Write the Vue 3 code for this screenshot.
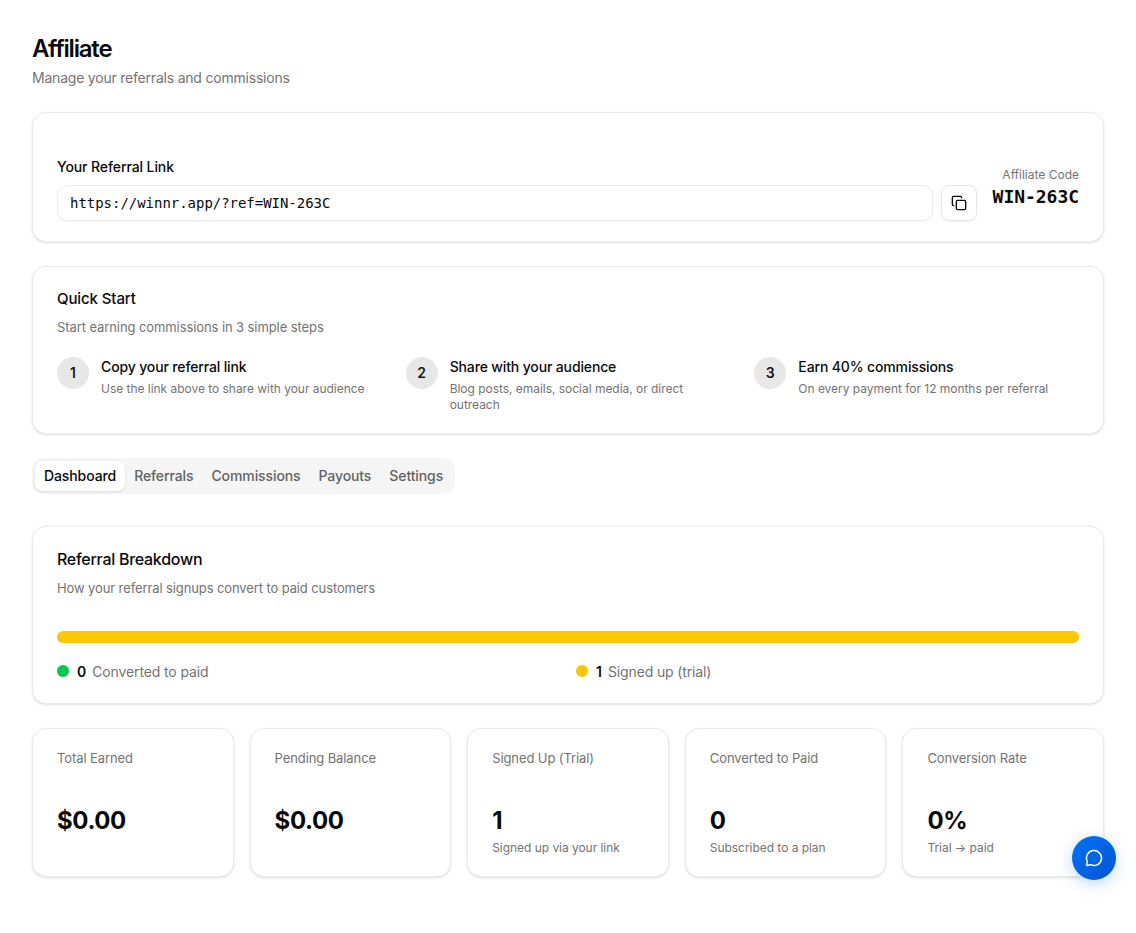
<template>
  <main class="page">
    <header class="page-header">
      <h1 class="page-title">Affiliate</h1>
      <p class="page-subtitle">Manage your referrals and commissions</p>
    </header>

    <section class="card link-card">
      <div class="link-field">
        <label class="link-label" for="referral_link">Your Referral Link</label>
        <div class="link-row">
          <input
            id="referral_link"
            class="link-input"
            type="text"
            :value="referralLink"
            readonly />
          <button class="copy-button" aria-label="Copy" @click="copyLink">
            <svg
              width="16"
              height="16"
              viewBox="0 0 24 24"
              fill="none"
              stroke="currentColor"
              stroke-width="2"
              stroke-linecap="round"
              stroke-linejoin="round">
              <rect x="8" y="8" width="14" height="14" rx="2" ry="2" />
              <path
                d="M4 16c-1.1 0-2-.9-2-2V4c0-1.1.9-2 2-2h10c1.1 0 2 .9 2 2" />
            </svg>
          </button>
        </div>
      </div>
      <div class="code-block">
        <p class="code-label">Affiliate Code</p>
        <p class="code-value">{{ affiliateCode }}</p>
      </div>
    </section>

    <section class="card quick-card">
      <h2 class="quick-title">Quick Start</h2>
      <p class="card-desc">Start earning commissions in 3 simple steps</p>
      <div class="steps">
        <div v-for="(step, index) in steps" :key="step.title" class="step">
          <span class="step-number">{{ index + 1 }}</span>
          <div class="step-body">
            <p class="step-title">{{ step.title }}</p>
            <p class="step-text">{{ step.text }}</p>
          </div>
        </div>
      </div>
    </section>

    <nav class="tabs">
      <button
        v-for="tab in tabs"
        :key="tab"
        class="tab"
        :class="{ active: tab === activeTab }"
        @click="activeTab = tab">
        {{ tab }}
      </button>
    </nav>

    <section class="card breakdown-card">
      <h2 class="breakdown-title">Referral Breakdown</h2>
      <p class="card-desc breakdown-desc">
        How your referral signups convert to paid customers
      </p>
      <div class="bar">
        <div
          v-for="item in breakdown"
          :key="item.label"
          class="bar-part"
          :class="item.color"
          :style="{ width: (item.count / total) * 100 + '%' }"></div>
      </div>
      <div class="legend">
        <div v-for="item in breakdown" :key="item.label" class="legend-item">
          <span class="dot" :class="item.color"></span>
          <span class="legend-count">{{ item.count }}</span>
          <span class="legend-label">{{ item.label }}</span>
        </div>
      </div>
    </section>

    <section class="stats">
      <div v-for="stat in stats" :key="stat.label" class="card stat-card">
        <p class="stat-label">{{ stat.label }}</p>
        <p class="stat-value">{{ stat.value }}</p>
        <p v-if="stat.note" class="stat-note">{{ stat.note }}</p>
      </div>
    </section>

    <button class="chat-button" aria-label="Chat">
      <svg
        width="18"
        height="18"
        viewBox="0 0 24 24"
        fill="none"
        stroke="currentColor"
        stroke-width="2"
        stroke-linecap="round"
        stroke-linejoin="round">
        <path
          d="M2.992 16.342a2 2 0 0 1 .094 1.167l-1.065 3.29a1 1 0 0 0 1.236 1.168l3.413-.998a2 2 0 0 1 1.099.092 10 10 0 1 0-4.777-4.719" />
      </svg>
    </button>
  </main>
</template>

<script setup>
import { ref, computed } from "vue";

const affiliateCode = ref("WIN-263C");
const referralLink = computed(
  () => `https://winnr.app/?ref=${affiliateCode.value}`
);

const steps = [
  {
    title: "Copy your referral link",
    text: "Use the link above to share with your audience",
  },
  {
    title: "Share with your audience",
    text: "Blog posts, emails, social media, or direct outreach",
  },
  {
    title: "Earn 40% commissions",
    text: "On every payment for 12 months per referral",
  },
];

const tabs = ["Dashboard", "Referrals", "Commissions", "Payouts", "Settings"];
const activeTab = ref("Dashboard");

const breakdown = ref([
  { label: "Converted to paid", count: 0, color: "green" },
  { label: "Signed up (trial)", count: 1, color: "yellow" },
]);
const total = computed(() =>
  breakdown.value.reduce((sum, item) => sum + item.count, 0)
);

const stats = [
  { label: "Total Earned", value: "$0.00" },
  { label: "Pending Balance", value: "$0.00" },
  { label: "Signed Up (Trial)", value: "1", note: "Signed up via your link" },
  { label: "Converted to Paid", value: "0", note: "Subscribed to a plan" },
  { label: "Conversion Rate", value: "0%", note: "Trial → paid" },
];

const copyLink = () => {
  navigator.clipboard.writeText(referralLink.value);
};
</script>

<style>
body {
  margin: 0;
  background: #ffffff;
}
</style>

<style scoped>
.page {
  box-sizing: border-box;
  min-height: 933px;
  padding: 32px;
  font-family: Inter, "Liberation Sans", sans-serif;
  font-size: 14px;
  line-height: 20px;
  color: #0a0a0a;
}
.page *,
.page *::before {
  box-sizing: border-box;
}
h1,
h2,
p {
  margin: 0;
}
button {
  font-family: inherit;
  cursor: pointer;
}
.page-header {
  margin-bottom: 24px;
}
.page-title {
  padding-top: 1px;
  font-size: 24px;
  line-height: 32px;
  font-weight: 600;
  letter-spacing: -1.2px;
}
.page-subtitle {
  margin-top: 3px;
  letter-spacing: -0.21px;
  color: #737373;
}
.card {
  background: #ffffff;
  border: 1px solid #ebebeb;
  border-radius: 14px;
  box-shadow: 0 1px 3px rgba(0, 0, 0, 0.1), 0 1px 2px -1px rgba(0, 0, 0, 0.1);
}
.link-card {
  display: flex;
  align-items: center;
  gap: 16px;
  padding: 44px 24px 20px;
}
.link-field {
  flex: 1;
}
.link-label {
  display: block;
  font-weight: 500;
  letter-spacing: -0.1px;
}
.link-row {
  display: flex;
  gap: 8px;
  margin-top: 8px;
}
.link-input {
  flex: 1;
  min-width: 0;
  height: 36px;
  padding: 0 12px;
  border: 1px solid #ebebeb;
  border-radius: 10px;
  background: transparent;
  box-shadow: 0 1px 2px rgba(0, 0, 0, 0.05);
  color: #0a0a0a;
  font-family: "DejaVu Sans Mono", "Liberation Mono", monospace;
  font-size: 14px;
  letter-spacing: -0.03px;
  outline: none;
}
.copy-button {
  display: flex;
  align-items: center;
  justify-content: center;
  width: 36px;
  height: 36px;
  padding: 0;
  border: 1px solid #e5e5e5;
  border-radius: 8px;
  background: #ffffff;
  box-shadow: 0 1px 2px rgba(0, 0, 0, 0.05);
  color: #0a0a0a;
}
.code-block {
  text-align: right;
}
.code-label {
  font-size: 12px;
  line-height: 16px;
  color: #737373;
}
.code-value {
  font-family: "DejaVu Sans Mono", "Liberation Mono", monospace;
  font-size: 18px;
  line-height: 28px;
  font-weight: 700;
  letter-spacing: -0.04px;
}
.quick-card {
  margin-top: 24px;
  padding: 20px 24px;
}
.quick-title {
  font-size: 15px;
  line-height: 24px;
  font-weight: 500;
  letter-spacing: -0.1px;
}
.card-desc {
  margin-top: 6px;
  font-size: 13px;
  line-height: 20px;
  letter-spacing: -0.09px;
  color: #737373;
}
.steps {
  display: grid;
  grid-template-columns: repeat(3, 1fr);
  gap: 24px;
  margin-top: 20px;
}
.step {
  display: flex;
  gap: 12px;
}
.step-number {
  display: flex;
  align-items: center;
  justify-content: center;
  flex-shrink: 0;
  width: 32px;
  height: 32px;
  border-radius: 50%;
  background: #e7e7e7;
  color: #171717;
  font-weight: 600;
}
.step-title {
  font-weight: 500;
  letter-spacing: -0.14px;
}
.step-text {
  margin-top: 4px;
  font-size: 12px;
  line-height: 16px;
  letter-spacing: -0.03px;
  color: #737373;
}
.tabs {
  display: flex;
  width: fit-content;
  height: 36px;
  margin-top: 24px;
  padding: 3px;
  border-radius: 10px;
  background: #f5f5f5;
}
.tab {
  padding: 0 9px;
  border: none;
  border-radius: 8px;
  background: none;
  color: #636363;
  font-size: 14px;
  line-height: 20px;
  font-weight: 500;
  letter-spacing: -0.1px;
}
.tab.active {
  background: #ffffff;
  color: #0a0a0a;
  box-shadow: 0 1px 3px rgba(0, 0, 0, 0.1), 0 1px 2px -1px rgba(0, 0, 0, 0.1);
}
.breakdown-card {
  margin-top: 32px;
  padding: 20px 24px;
}
.breakdown-title {
  font-size: 16px;
  line-height: 24px;
  font-weight: 500;
  letter-spacing: -0.28px;
}
.breakdown-desc {
  margin-top: 7px;
  letter-spacing: -0.11px;
}
.bar {
  display: flex;
  height: 12px;
  margin-top: 33px;
  border-radius: 6px;
  background: #f5f5f5;
  overflow: hidden;
}
.green {
  background: #00c950;
}
.yellow {
  background: #fdc700;
}
.legend {
  display: grid;
  grid-template-columns: repeat(2, 1fr);
  gap: 16px;
  margin-top: 18px;
}
.legend-item {
  display: flex;
  align-items: center;
  height: 22px;
}
.dot {
  width: 12px;
  height: 12px;
  margin: 0 8px 2px 0;
  border-radius: 50%;
}
.legend-count {
  margin-right: 6px;
  font-weight: 600;
}
.legend-label {
  letter-spacing: -0.13px;
  color: #737373;
}
.stats {
  display: grid;
  grid-template-columns: repeat(5, 1fr);
  gap: 16px;
  margin-top: 24px;
}
.stat-card {
  height: 149px;
  padding: 20px 24px;
}
.stat-label {
  font-size: 13px;
  line-height: 19px;
  letter-spacing: -0.1px;
  color: #737373;
}
.stat-value {
  margin-top: 37px;
  font-size: 24px;
  line-height: 32px;
  font-weight: 700;
  letter-spacing: -0.4px;
}
.stat-note {
  margin-top: 3px;
  font-size: 12px;
  line-height: 16px;
  letter-spacing: -0.04px;
  color: #737373;
}
.chat-button {
  position: fixed;
  right: 20px;
  bottom: 53px;
  display: flex;
  align-items: center;
  justify-content: center;
  width: 44px;
  height: 44px;
  padding: 0;
  border: none;
  border-radius: 50%;
  background: linear-gradient(135deg, #0073f5, #0055d4);
  box-shadow: 0 4px 16px rgba(0, 111, 238, 0.25);
  color: #ffffff;
}
</style>
